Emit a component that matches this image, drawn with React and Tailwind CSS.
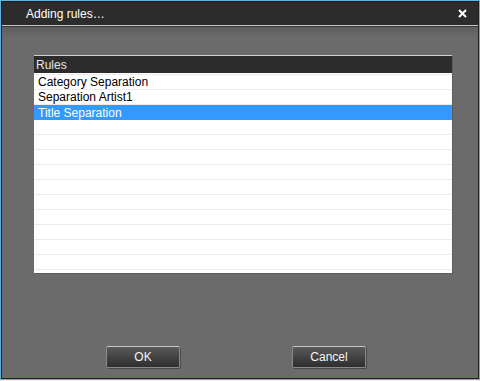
const rows = ["Category Separation", "Separation Artist1", "Title Separation"];

export default function App() {
  const selected = 2;
  const filler = Array.from({ length: 10 });

  return (
    <div
      className="w-[480px] h-[381px] bg-[#e6f2fa] pb-[1px]"
      style={{ fontFamily: '"Liberation Sans", Arial, sans-serif' }}
    >
      <div className="h-full border border-[#5fb3e4] flex flex-col">
        <div className="flex-1 flex flex-col border border-[#1e1e1e] bg-[#6b6b6b]">
          {/* Title bar */}
          <div className="h-[23px] bg-[#2c2c2c] flex items-center justify-between pl-[24px] pr-[11px] shrink-0">
            <span className="text-[12px] text-white">Adding rules…</span>
            <svg width="9" height="9" viewBox="0 0 9 9">
              <path d="M1 1 L8 8 M8 1 L1 8" stroke="#ffffff" strokeWidth="2" />
            </svg>
          </div>
          <div className="h-[1px] bg-[#c4c4c4] shrink-0" />
          <div className="h-[1px] bg-[#3a3a3a] shrink-0" />

          {/* Content */}
          <div className="flex-1 flex flex-col bg-gradient-to-b from-[#5e5e5e] via-[#6b6b6b] via-[3%] to-[#6b6b6b]">
            <div className="ml-[32px] mt-[28px] w-[418px] h-[218px] flex flex-col bg-white shadow-[1px_1px_0_#5c5c5c]">
              <div className="h-[18px] bg-[#2c2c2c] border-t border-[#d0d0d0] flex items-center pl-[2px] shrink-0">
                <span className="text-[12px] text-[#e8e8e8]">Rules</span>
              </div>
              <div className="h-[2px] bg-white border-b border-[#ebebeb] shrink-0" />
              {rows.map((r, i) => (
                <div
                  key={r}
                  className={
                    i === selected
                      ? "h-[15px] bg-[#3399ff] text-white flex items-center pl-[4px] text-[12px] shrink-0"
                      : "h-[15px] border-b border-[#ebebeb] text-black flex items-center pl-[4px] text-[12px] shrink-0"
                  }
                >
                  {r}
                </div>
              ))}
              {filler.map((_, i) => (
                <div key={i} className="h-[15px] border-b border-[#ebebeb] shrink-0" />
              ))}
            </div>

            <div className="flex-1" />
            <div className="flex pl-[104px] gap-[112px] mb-[10px]">
              <Button label="OK" />
              <Button label="Cancel" />
            </div>
          </div>
        </div>
      </div>
    </div>
  );
}

function Button({ label }) {
  return (
    <div className="w-[74px] h-[22px] rounded-[2px] border border-[#8a8a8a] border-t-[#c8c8c8] bg-gradient-to-b from-[#5a5a5a] to-[#2e2e2e] flex items-center justify-center shadow-[1px_1px_0_#4a4a4a]">
      <span className="text-[12px] text-[#f4f4f4]">{label}</span>
    </div>
  );
}
